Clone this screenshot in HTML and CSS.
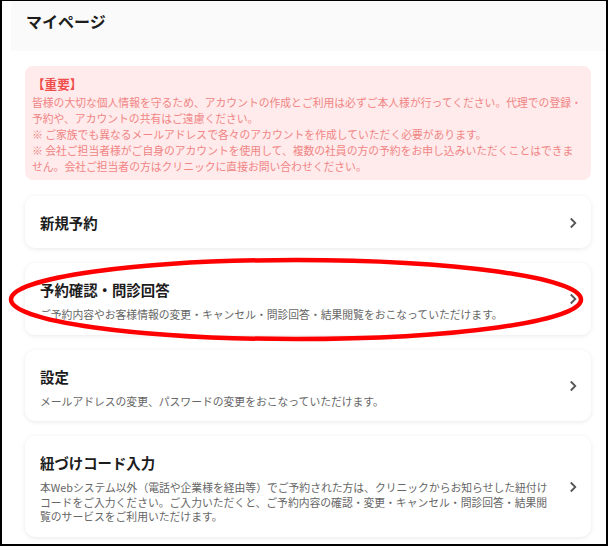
FILE: index.html
```html
<!DOCTYPE html>
<html lang="ja">
  <head>
    <meta charset="UTF-8" />
    <meta name="viewport" content="width=device-width, initial-scale=1.0" />
    <title>マイページ</title>
    <link rel="stylesheet" href="styles.css">
  </head>
  <body>
    <div class="frame relative overflow-hidden">
      <div class="page">
        <header class="header">
          <h1 class="page-title">マイページ</h1>
        </header>

        <main class="main flex flex-col">
          <div class="alert">
            <p class="alert-title">【重要】</p>
            <p>皆様の大切な個人情報を守るため、アカウントの作成とご利用は必ずご本人様が行ってください。代理での登録・予約や、アカウントの共有はご遠慮ください。</p>
            <p>※ ご家族でも異なるメールアドレスで各々のアカウントを作成していただく必要があります。</p>
            <p>※ 会社ご担当者様がご自身のアカウントを使用して、複数の社員の方の予約をお申し込みいただくことはできません。会社ご担当者の方はクリニックに直接お問い合わせください。</p>
          </div>

          <a class="card flex items-center" href="#">
            <div class="card-body">
              <div class="card-title">新規予約</div>
            </div>
            <svg class="chevron" viewBox="0 0 16 16">
              <polyline points="5.8,3.5 10.3,8 5.8,12.5" />
            </svg>
          </a>

          <a class="card flex items-center" href="#">
            <div class="card-body">
              <div class="card-title">予約確認・問診回答</div>
              <p class="card-text">ご予約内容やお客様情報の変更・キャンセル・問診回答・結果閲覧をおこなっていただけます。</p>
            </div>
            <svg class="chevron" viewBox="0 0 16 16">
              <polyline points="5.8,3.5 10.3,8 5.8,12.5" />
            </svg>
          </a>

          <a class="card flex items-center" href="#">
            <div class="card-body">
              <div class="card-title">設定</div>
              <p class="card-text">メールアドレスの変更、パスワードの変更をおこなっていただけます。</p>
            </div>
            <svg class="chevron" viewBox="0 0 16 16">
              <polyline points="5.8,3.5 10.3,8 5.8,12.5" />
            </svg>
          </a>

          <a class="card flex items-center" href="#">
            <div class="card-body">
              <div class="card-title">紐づけコード入力</div>
              <p class="card-text">本Webシステム以外（電話や企業様を経由等）でご予約された方は、クリニックからお知らせした紐付けコードをご入力ください。ご入力いただくと、ご予約内容の確認・変更・キャンセル・問診回答・結果閲覧のサービスをご利用いただけます。</p>
            </div>
            <svg class="chevron" viewBox="0 0 16 16">
              <polyline points="5.8,3.5 10.3,8 5.8,12.5" />
            </svg>
          </a>
        </main>
      </div>

      <!-- red highlight drawn over the screenshot -->
      <svg class="annotation" viewBox="0 0 608 547">
        <ellipse cx="296" cy="299.5" rx="285" ry="39.5" />
      </svg>
    </div>
  </body>
</html>
```

FILE: styles.css
```css
* {
  margin: 0;
  padding: 0;
  box-sizing: border-box;
}

body {
  font-family: "Noto Sans CJK JP", "Noto Sans", sans-serif;
  background-color: white;
  color: #222;
}

.relative {
  position: relative;
}

.overflow-hidden {
  overflow: hidden;
}

.flex {
  display: flex;
}

.flex-col {
  flex-direction: column;
}

.items-center {
  align-items: center;
}

.frame {
  width: 608px;
  height: 546px;
  border: 2px solid black;
  border-top-width: 1px;
}

.page {
  margin-left: 9px;
}

.header {
  height: 50px;
  padding: 8px 15px 0;
  background-color: #fafafa;
}

.page-title {
  font-size: 16px;
  line-height: 24px;
  font-weight: 700;
  color: #1c1c1c;
}

.main {
  padding: 15px 15px 0 14px;
  gap: 15px;
}

.alert {
  margin-bottom: 1px;
  padding: 7px 8.5px 6px 7px;
  border-radius: 8px;
  background-color: #ffebeb;
  color: #f08585;
  font-size: 10.8px;
  line-height: 16px;
}

.alert .alert-title {
  font-size: 12.6px;
  line-height: 21px;
  font-weight: 700;
  color: #f04d4d;
}

.card {
  padding: 14px 10px 13px 15px;
  border-radius: 10px;
  background-color: white;
  box-shadow: 0 1px 5px rgba(0, 0, 0, 0.09);
  color: inherit;
  text-decoration: none;
}

.card-body {
  flex: 1;
  min-width: 0;
}

.card-title {
  font-size: 14.4px;
  line-height: 25px;
  font-weight: 700;
  color: #1c1c1c;
}

.card-text {
  margin-top: 5px;
  font-size: 10.8px;
  line-height: 14.5px;
  color: #666;
}

.chevron {
  flex-shrink: 0;
  width: 16px;
  height: 16px;
  margin-left: 13px;
  fill: none;
  stroke: #555;
  stroke-width: 1.8;
}

.annotation {
  position: absolute;
  top: -1px;
  left: -2px;
  width: 608px;
  height: 547px;
  pointer-events: none;
}

.annotation ellipse {
  fill: none;
  stroke: #ff0000;
  stroke-width: 4.5;
}
```
